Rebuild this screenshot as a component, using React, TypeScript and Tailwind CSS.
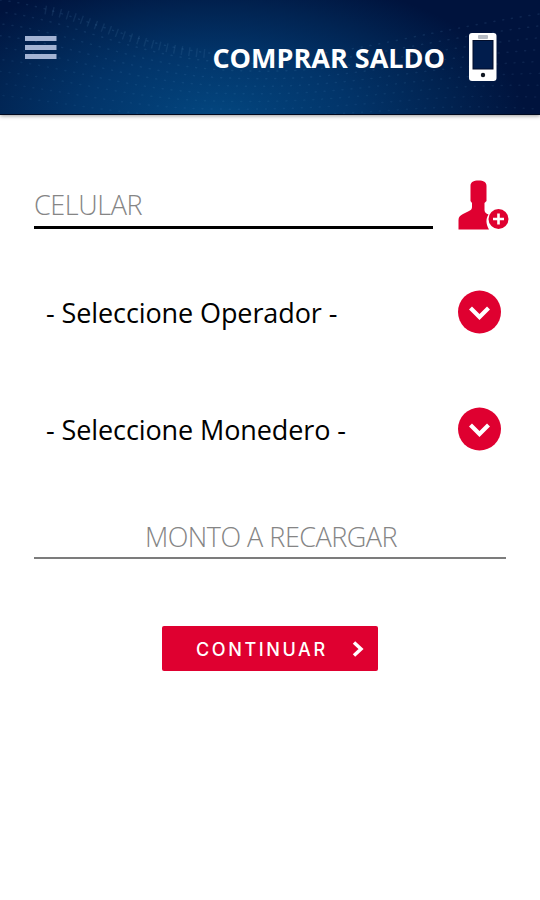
const waves = Array.from({ length: 9 }, (_, i) => i);

const HeaderTexture = () => (
  <svg className="absolute inset-0 h-full w-full" viewBox="0 0 540 115" preserveAspectRatio="none" fill="none" aria-hidden="true">
    <g stroke="#6fa8d8" strokeWidth="1.500" strokeLinecap="round" strokeDasharray="1 8">
      {waves.map((i) => (
        <path
          key={i}
          d={`M0 ${i * 12} C70 ${8 + i * 12} 130 ${46 + i * 9} 215 ${54 + i * 8} S350 ${50 + i * 8} 410 ${38 + i * 9} S500 ${20 + i * 11} 540 ${14 + i * 12}`}
          strokeDashoffset={i * 3}
          opacity={0.13 - i * 0.006}
        />
      ))}
    </g>
    <path d="M45 10 C90 17 130 47 205 54" stroke="#5b8dbb" strokeWidth="9" strokeDasharray="1.500 6" opacity="0.14" />
  </svg>
);

const MenuIcon = () => (
  <svg className="h-6 w-8" viewBox="0 0 32 24" fill="#a3b3d3" aria-hidden="true">
    <path d="M0 0h31.500v5H0zM0 9h31.500v5H0zM0 18h31.500v5H0z" />
  </svg>
);

const PhoneIcon = () => (
  <svg className="h-12 w-7" viewBox="0 0 28 48" aria-hidden="true">
    <rect width="27.500" height="48" rx="3" fill="#fff" />
    <rect x="9" y="2" width="10" height="4" rx="1" fill="#b6bbc4" />
    <rect x="4" y="7.500" width="20" height="28.500" fill="#011d4d" stroke="#020d2a" />
    <circle cx="14" cy="42" r="2.2" fill="#101722" />
  </svg>
);

const AddContactIcon = () => (
  <svg className="h-[50px] w-[52px]" viewBox="0 0 52 50" fill="#df0030" aria-hidden="true">
    <path d="M12.500 6C12.500 2 15.500 .500 20.500 .500S28.500 2 28.500 6V21L26.500 23V30C26.500 32 28 33.500 30.500 34.500C27.500 39 28 44 31 49.500H.500V40C.500 37 2 35.500 5 34L11 31C13 30 14 29 14 27V23L12.500 21Z" />
    <circle cx="40.500" cy="39" r="10" />
    <path d="M40.500 33.500v11M35 39h11" stroke="#fff" strokeWidth="2.600" />
  </svg>
);

const DropdownIcon = () => (
  <svg className="h-11 w-11" viewBox="0 0 44 44" fill="none" aria-hidden="true">
    <circle cx="21.500" cy="22" r="21.500" fill="#df0030" />
    <path d="M12.500 18L21.500 27L30.500 18" stroke="#fff" strokeWidth="4.200" />
  </svg>
);

const SelectRow = ({ label }: { label: string }) => (
  <button className="flex h-11 w-full items-center justify-between pl-3 text-black">
    <span className="whitespace-nowrap text-[27px] leading-none tracking-[-0.1px]">{label}</span>
    <DropdownIcon />
  </button>
);

const App = () => (
  <div className="flex min-h-screen flex-col bg-white font-['Open_Sans',sans-serif]">
    <header className="relative h-[115px] border-b border-[#00091f] bg-[radial-gradient(ellipse_310px_150px_at_215px_120px,#034780_0%,#023469_45%,#012351_75%,#00133d_100%)] shadow-[0_1px_4px_rgba(0,0,0,0.4)]">
      <HeaderTexture />
      <div className="relative flex h-full justify-between pl-[25px] pr-[43px]">
        <button className="mt-9 h-6" aria-label="Menu">
          <MenuIcon />
        </button>
        <div className="mt-[33px] flex h-12 items-center gap-6">
          <h1 className="whitespace-nowrap text-[27px] leading-none font-bold text-white">COMPRAR SALDO</h1>
          <PhoneIcon />
        </div>
      </div>
    </header>

    <main className="flex flex-1 flex-col px-[34px] pt-[65px]">
      <div className="flex h-[50px] items-start justify-between">
        <div className="flex h-[49px] w-[399px] items-center border-b-[3px] border-black pt-0.5 text-[27px] leading-none font-light tracking-[-0.4px] text-[#858585]">
          CELULAR
        </div>
        <div className="-mr-1">
          <AddContactIcon />
        </div>
      </div>

      <div className="mt-[60px] flex flex-col gap-[73px] pr-1">
        <SelectRow label="- Seleccione Operador -" />
        <SelectRow label="- Seleccione Monedero -" />
      </div>

      <div className="mt-[63px] flex h-[45px] items-center justify-center border-b-2 border-[#7c7c7c] pt-0.5 pl-0.5 text-[27px] leading-none font-light tracking-[-0.5px] text-[#858585]">
        MONTO A RECARGAR
      </div>

      <button className="mt-[67px] flex h-[45px] w-[216px] items-center self-center rounded-[2px] bg-[#df0030] pr-3.5 pl-[34px] text-white">
        <span className="pt-0.5 font-['Inter',sans-serif] text-[18px] leading-none font-medium tracking-[2.6px]">CONTINUAR</span>
        <svg className="ml-auto h-4 w-3" viewBox="0 0 12 16" fill="none" aria-hidden="true">
          <path d="M2 1.500L9 8L2 14.500" stroke="#fff" strokeWidth="3.500" />
        </svg>
      </button>
    </main>
  </div>
);

export default App;
